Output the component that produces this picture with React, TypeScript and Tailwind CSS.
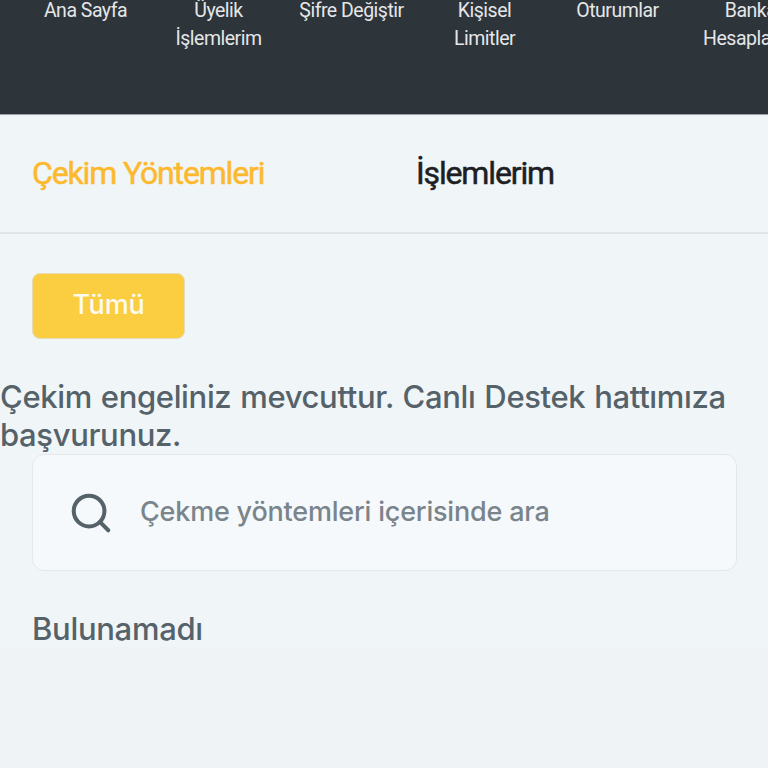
import { Search } from "lucide-react";

const nav = [
  ["Ana Sayfa"],
  ["Üyelik", "İşlemlerim"],
  ["Şifre Değiştir"],
  ["Kişisel", "Limitler"],
  ["Oturumlar"],
  ["Banka", "Hesaplarım"],
];

export default function App() {
  return (
    <div className="flex h-[768px] w-[768px] flex-col overflow-hidden bg-[#f0f5f8] font-['Inter',sans-serif]">
      <header className="flex h-[115px] shrink-0 overflow-hidden border-b border-[#9aa0a5] bg-[#2d343a] pl-[19px]">
        {nav.map((lines) => (
          <div key={lines[0]} className="-mt-[3px] flex w-[133px] shrink-0 flex-col items-center font-['Roboto',sans-serif] text-[19.5px] leading-[28px] tracking-[-0.5px] text-[#e4e6e8]">
            {lines.map((l) => (
              <span key={l} className="whitespace-nowrap">{l}</span>
            ))}
          </div>
        ))}
      </header>
      <div className="flex h-[119px] shrink-0 items-center border-b-2 border-[#e0e5e9] pb-[2px] pl-[32px] font-['Roboto',sans-serif] text-[32px] tracking-[-1.15px]">
        <span className="w-[384px] text-[#fdb92e] [-webkit-text-stroke:0.5px_#fdb92e]">Çekim Yöntemleri</span>
        <span className="text-[#1c2024] [-webkit-text-stroke:0.5px_#1c2024]">İşlemlerim</span>
      </div>
      <button className="ml-[32px] mt-[39px] flex h-[66px] w-[153px] shrink-0 items-center justify-center rounded-[8px] border border-[#e6dcb8] bg-[#fbcd41] pb-[2px] text-[27px] font-medium tracking-[-0.2px] text-[#fdfaf0]">
        Tümü
      </button>
      <p className="mt-[39px] w-[750px] shrink-0 text-[31px] font-medium leading-[38px] tracking-[-0.35px] text-[#55626a] [word-spacing:1px]">
        Çekim engeliniz mevcuttur. Canlı Destek hattımıza başvurunuz.
      </p>
      <div className="mx-[32px] flex h-[117px] w-[705px] shrink-0 items-center rounded-[12px] border border-[#e2e8ec] bg-[#f5f9fb] pl-[35px]">
        <Search size={46} strokeWidth={2.1} className="text-[#55626a]" />
        <span className="ml-[26px] text-[27px] font-medium tracking-[-0.2px] text-[#7a848b]">Çekme yöntemleri içerisinde ara</span>
      </div>
      <p className="ml-[32px] mt-[38px] h-[38px] text-[31px] font-medium leading-[40px] tracking-[-0.3px] text-[#55626a]">Bulunamadı</p>
      <div className="flex-1 bg-[#eff3f5]" />
    </div>
  );
}
